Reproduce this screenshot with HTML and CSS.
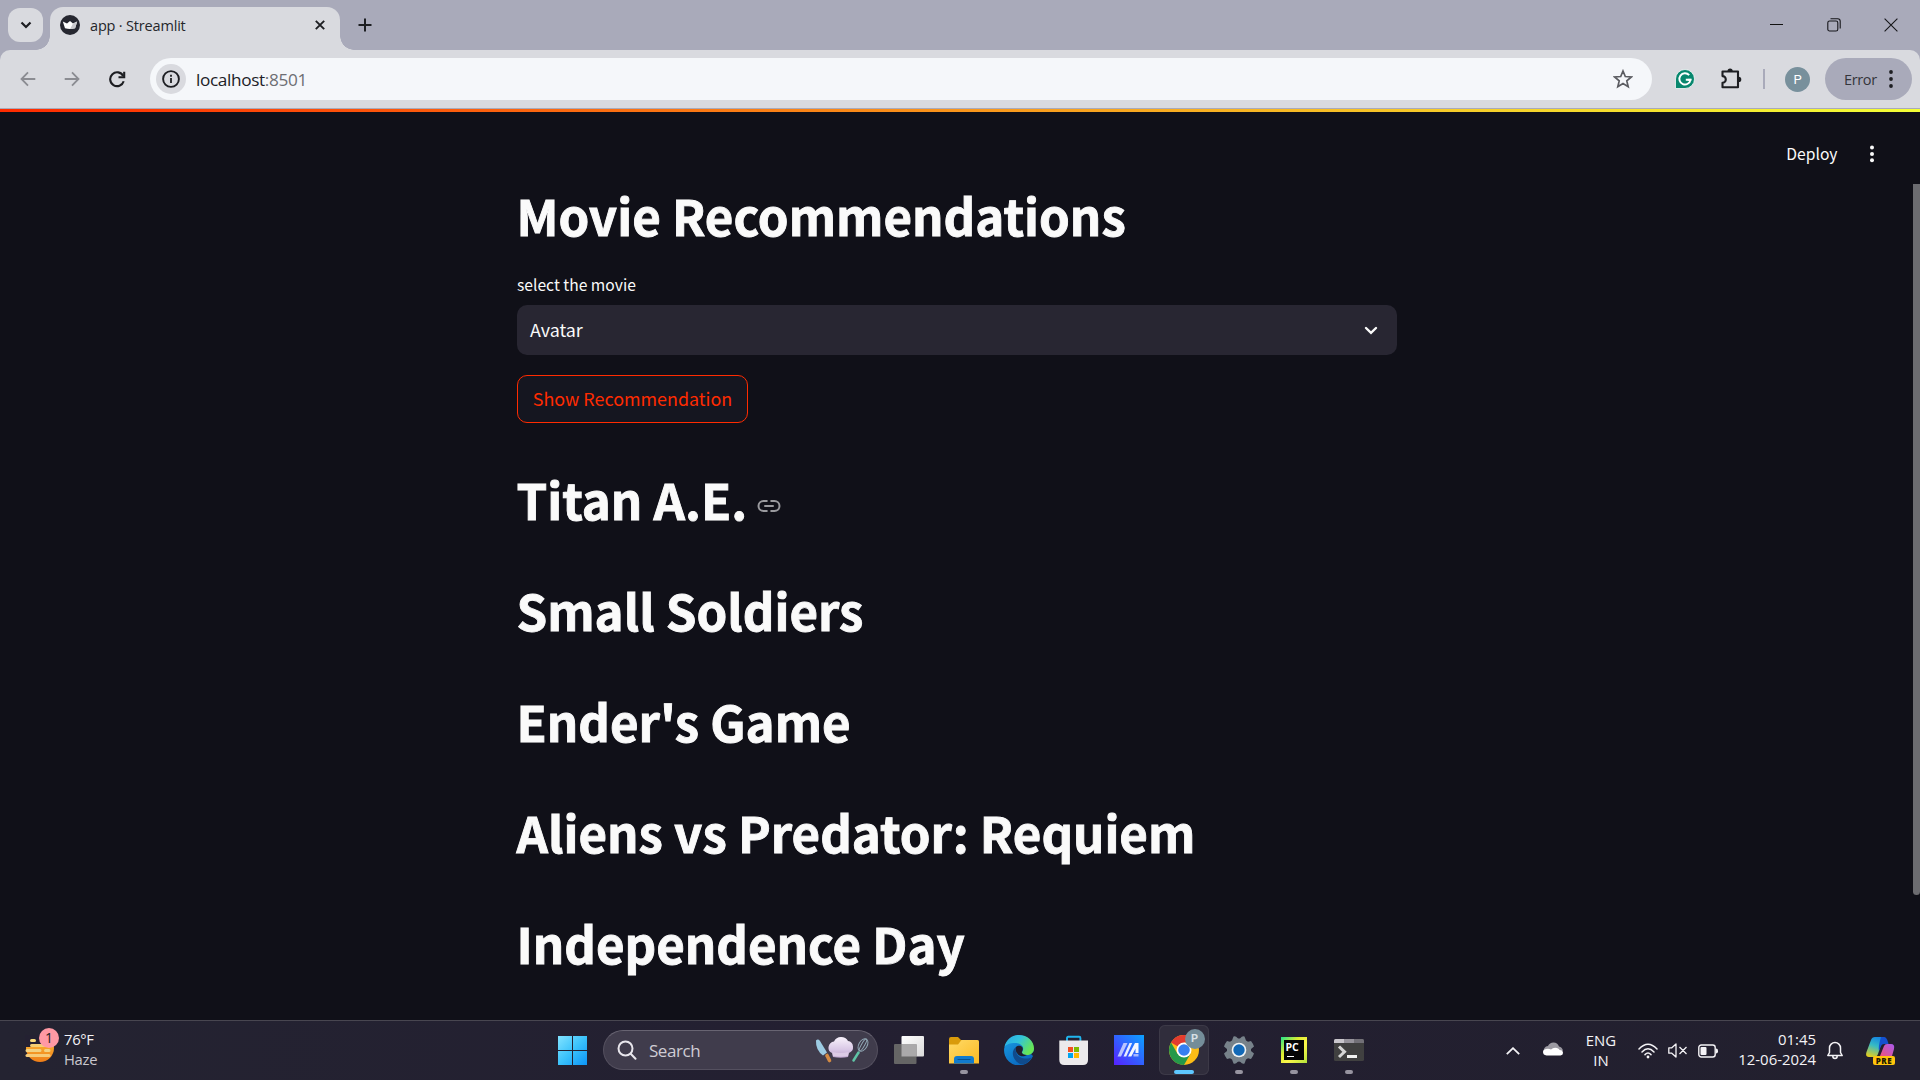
FILE: index.html
```html
<!DOCTYPE html>
<html lang="en">
<head>
<meta charset="utf-8">
<title>app · Streamlit</title>
<link rel="stylesheet" href="styles.css">
</head>
<body>
<div class="screen">
  <header class="tabstrip">
    <button class="tab-search" aria-label="Search tabs"><svg width="12" height="8" viewBox="0 0 12 8"><path d="M1.5 1.5 6 6l4.5-4.5" fill="none" stroke="#1d1e22" stroke-width="2.2"/></svg></button>
    <div class="tab">
      <svg class="favicon" width="20" height="20" viewBox="0 0 20 20"><circle cx="10" cy="10" r="10" fill="#262730"/><path d="M2.800 6.500 7 8.500 10 6l3 2.500 4.200-2-2.100 6.700Q10 14.800 5 13.200z" fill="#fff"/><path d="m13 8.500 4.200-2-2.100 6.700-5 .9z" fill="#c9c9cd"/></svg>
      <span class="tab-title">app · Streamlit</span>
      <svg class="tab-close" width="10" height="10" viewBox="0 0 10 10"><path d="m.8.8 8.400 8.400m0-8.400L.8 9.200" stroke="#1d1e22" stroke-width="1.900"/></svg>
    </div>
    <svg class="new-tab" width="14" height="14" viewBox="0 0 14 14"><path d="M7 .5v13M.5 7h13" stroke="#1d1e22" stroke-width="2"/></svg>
    <div class="window-controls">
      <svg width="14" height="14" viewBox="0 0 14 14"><path d="M0 6.500h13" stroke="#111"/></svg>
      <svg width="14" height="14" viewBox="0 0 14 14" fill="none" stroke="#16161a" stroke-width="1.100"><rect x=".8" y="3" width="10" height="10" rx="1.800"/><path d="M3.500.8h7.200q2.500 0 2.500 2.500v7.200"/></svg>
      <svg width="14" height="14" viewBox="0 0 14 14"><path d="m.6.6 12.800 12.800m0-12.800L.6 13.400" stroke="#16161a" stroke-width="1.100"/></svg>
    </div>
  </header>

  <nav class="toolbar-wrap"><div class="toolbar">
    <svg class="nav-back" width="16" height="16" viewBox="0 0 16 16" fill="none" stroke="#8b8c92" stroke-width="1.800"><path d="M15.300 8H1.800M8 1.300 1.500 8 8 14.700"/></svg>
    <svg class="nav-forward" width="16" height="16" viewBox="0 0 16 16" fill="none" stroke="#8b8c92" stroke-width="1.800"><path d="M.7 8h13.500M8 1.300 14.500 8 8 14.700"/></svg>
    <svg class="nav-reload" width="17" height="17" viewBox="0 0 17 17" fill="none" stroke="#1d1e22" stroke-width="2.100"><path d="M14.700 10.200A6.900 6.900 0 1 1 14.200 5"/><path d="M15.200.8v5.500H9.500"/></svg>
    <div class="omnibox">
      <span class="site-info"><svg width="18" height="18" viewBox="0 0 18 18"><circle cx="9" cy="9" r="7.900" fill="none" stroke="#1d1e22" stroke-width="1.900"/><path d="M9 8v5M9 4.800v2" stroke="#1d1e22" stroke-width="1.800"/></svg></span>
      <span class="url">localhost<span class="port">:8501</span></span>
      <svg class="star" width="20" height="20" viewBox="0 0 20 20"><path d="m10 2 2.300 5.500 6 .5-4.500 3.900 1.400 5.800L10 14.600l-5.200 3.100 1.400-5.800L1.700 8l6-.5z" fill="none" stroke="#5b5c61" stroke-width="1.700"/></svg>
    </div>
    <svg class="ext-grammar" width="20" height="20" viewBox="0 0 20 20"><path d="M10 .5A9.500 9.500 0 1 1 10 19.500H.5V10A9.500 9.500 0 0 1 10 .5z" fill="#08876e" stroke="#f4f7f7" stroke-width=".8"/><path d="M14.200 6.200A5.600 5.600 0 1 0 15.500 10.800H10.800" fill="none" stroke="#fff" stroke-width="1.900"/><path d="M12.700 10.800h3.600" stroke="#fff" stroke-width="1.900"/></svg>
    <svg class="ext-puzzle" width="22" height="22" viewBox="0 0 22 22"><path d="M2.500 3.500h15.500v15.800H2.500v-4.600a3.300 3.300 0 0 0 0-6.600z" fill="none" stroke="#1d1e22" stroke-width="2.100" stroke-linejoin="round"/><path d="M7.500 3a2.600 2.600 0 0 1 5.200 0M18.700 8.800a2.600 2.600 0 0 1 0 5.200" fill="#1d1e22"/></svg>
    <span class="divider"></span>
    <span class="avatar">P</span>
    <button class="error-menu"><span class="error-text">Error</span><svg width="4" height="18" viewBox="0 0 4 18" fill="#1d1e22"><circle cx="2" cy="2" r="1.900"/><circle cx="2" cy="9" r="1.900"/><circle cx="2" cy="16" r="1.900"/></svg></button>
  </div></nav>

  <main class="app">
    <div class="decoration"></div>
    <div class="app-actions">
      <span class="deploy">Deploy</span>
      <svg width="4" height="18" viewBox="0 0 4 18" fill="#fafafa"><circle cx="2" cy="2.500" r="2"/><circle cx="2" cy="8.900" r="2"/><circle cx="2" cy="15.200" r="2"/></svg>
    </div>
    <div class="scrollbar"></div>
    <section class="column">
      <h1>Movie Recommendations</h1>
      <label class="label">select the movie</label>
      <div class="select"><span class="select-value">Avatar</span><svg width="14" height="9" viewBox="0 0 14 9"><path d="m2 2 5 4.800L12 2" fill="none" stroke="#fafafa" stroke-width="2.400" stroke-linecap="round"/></svg></div>
      <button class="recommend">Show Recommendation</button>
      <h1>Titan A.E.<svg class="anchor" width="24" height="14" viewBox="0 0 24 14" fill="none" stroke="#9a9a9e" stroke-width="2" stroke-linecap="round"><path d="M9.800 2H6.500a5 5 0 0 0 0 10h3.300M14.200 2h3.300a5 5 0 0 1 0 10h-3.300M8 7h8"/></svg></h1>
      <h1>Small Soldiers</h1>
      <h1>Ender's Game</h1>
      <h1>Aliens vs Predator: Requiem</h1>
      <h1>Independence Day</h1>
    </section>
  </main>

  <footer class="taskbar">
    <div class="weather">
      <div class="weather-icon">
        <svg width="30" height="28" viewBox="0 0 30 28"><defs><linearGradient id="sun" x1="0" y1="0" x2="0" y2="1"><stop offset="0" stop-color="#ffc93d"/><stop offset="1" stop-color="#ee7d18"/></linearGradient></defs><circle cx="15" cy="13" r="14" fill="url(#sun)"/><path d="M0 0h30v8H22v4H0z" fill="#242132"/><g stroke-width="3" stroke-linecap="round"><path d="M6.500 5.500h3" stroke="#f9dc7b"/><path d="M6.500 10.500h14" stroke="#f5cf72"/><path d="M2 15.500h13M20.500 15.500h3.500" stroke="#f3d281"/><path d="M2 20.500h22" stroke="#f6cb78"/></g></svg>
        <span class="weather-badge">1</span>
      </div>
      <div class="weather-text"><span class="temp">76°F</span><span class="haze">Haze</span></div>
    </div>

    <div class="dock">
      <svg class="start" width="29" height="29" viewBox="0 0 29 29"><defs><linearGradient id="win" x1="0" y1="0" x2="1" y2="1"><stop offset="0" stop-color="#82e3ff"/><stop offset=".5" stop-color="#3bc2fb"/><stop offset="1" stop-color="#0c94f6"/></linearGradient></defs><path d="M0 0h14v14H0zM15 0h14v14H15zM0 15h14v14H0zM15 15h14v14H15z" fill="url(#win)"/></svg>
      <div class="search">
        <svg width="20" height="20" viewBox="0 0 20 20" fill="none" stroke="#e8e6ec" stroke-width="2" stroke-linecap="round"><circle cx="8.500" cy="8.500" r="7"/><path d="m13.700 13.700 4.800 5"/></svg>
        <span class="search-text">Search</span>
        <svg class="chef" width="54" height="28" viewBox="0 0 54 28"><defs><linearGradient id="hat" x1="0" y1="0" x2="0" y2="1"><stop offset="0" stop-color="#f8f2fb"/><stop offset=".6" stop-color="#d9c8e6"/><stop offset="1" stop-color="#b99fca"/></linearGradient></defs><path d="M1 4.500q2-2 4 .5l7 11.500-4 3Q.5 14 1 4.500z" fill="#9ccbe2"/><path d="m12 19.500 2.500 5" stroke="#d38a43" stroke-width="3.600" stroke-linecap="round"/><path d="M17 17q-4-1.500-3.500-6Q14.500 6 19 5.500 21 1 26 1t7 4q4.500.5 5 5.500.5 4.500-4 6.500l-1 4q-7 1.500-15 0z" fill="url(#hat)"/><path d="M17.500 16q8 2 16 0l-.5 4q-7 1.500-15 0z" fill="#dccbe6"/><g fill="none" stroke="#91a8b5" stroke-width="1"><ellipse cx="48" cy="9" rx="4.200" ry="6.800" transform="rotate(30 48 9)"/><ellipse cx="48" cy="9" rx="1.600" ry="6.800" transform="rotate(30 48 9)"/></g><path d="m43.500 16.500-5 8" stroke="#5fc4a6" stroke-width="2.500" stroke-linecap="round"/></svg>
      </div>
      <div class="dock-item"><svg width="30" height="30" viewBox="0 0 30 30"><defs><linearGradient id="tv" x1="0" y1="0" x2="1" y2="1"><stop offset="0" stop-color="#fff"/><stop offset="1" stop-color="#dadada"/></linearGradient></defs><rect x="7.500" y="1" width="22.500" height="20.500" rx="1" fill="url(#tv)"/><rect y="9" width="22.500" height="20" rx="1" fill="#656565"/><path d="M7.500 9h15v12.500h-15z" fill="#aaa9aa"/></svg></div>
      <div class="dock-item running"><svg width="30" height="30" viewBox="0 0 30 30"><defs><linearGradient id="folder" x1="0" y1="0" x2="1" y2="1"><stop offset="0" stop-color="#ffda67"/><stop offset="1" stop-color="#fbba23"/></linearGradient></defs><path d="M0 4q0-2 2-2h7l3 3h16q2 0 2 2v6H0z" fill="#d99b0b"/><path d="M0 9.500h9L12.500 5H28q2 0 2 2v21.500H0z" fill="url(#folder)"/><path d="M5 28.500V24q0-3 3-3h14q3 0 3 3v4.500z" fill="#117bcd"/><path d="M9 24.500h12" stroke="#075291" stroke-width="1.200" stroke-linecap="round"/></svg></div>
      <div class="dock-item"><svg width="30" height="30" viewBox="0 0 30 30"><defs><linearGradient id="e1" x1="0" y1="0" x2="1" y2=".5"><stop offset="0" stop-color="#28a9e7"/><stop offset=".5" stop-color="#32c3dc"/><stop offset="1" stop-color="#67e655"/></linearGradient><linearGradient id="e2" x1="0" y1="0" x2=".7" y2="1"><stop offset="0" stop-color="#1ba0e5"/><stop offset="1" stop-color="#0863bb"/></linearGradient></defs><path d="M29 21A15 15 0 1 1 30 14q0 3-3 5z" fill="url(#e2)"/><path d="M.4 12C2 4.500 8 0 15 0c8.500 0 15 6 15 13.500 0 4-3 6.500-7 6.500-3.500 0-5-1.500-5-2.500s1.200-1.500 1.200-4C19 10 15 8 11 8 6 8 2 9.500.4 12z" fill="url(#e1)"/><path d="M12 12c-3 2-4 6-2.500 10 2 5 6.500 7.500 9.500 7.500 4-1 7-4 8.500-7-3 1.500-8 1.500-11.500-.5-4-2.500-5-6.500-4-10z" fill="#104b8c"/><path d="M12 12c1.500-1.700 4.500-1.800 6.200 0 1.200 1.800.4 3.800-.3 4.700-.7 1.800 2.200 3.500 5.100 3.300-3 2-7 1.500-9-.5s-2.800-5-2-7.500z" fill="#211e2e"/></svg></div>
      <div class="dock-item"><svg width="30" height="30" viewBox="0 0 30 30"><path d="M8 7V3q0-1.200 1.200-1.200h11q1.200 0 1.200 1.200v4" fill="none" stroke="#20b5ee" stroke-width="1.900"/><path d="M.3 5.500h28.700V25q0 5-5 5H5.300q-5 0-5-5z" fill="#eceaec"/><path d="M9 12h5v5H9z" fill="#f25022"/><path d="M15 12h5v5h-5z" fill="#7fba00"/><path d="M9 18h5v5H9z" fill="#00a4ef"/><path d="M15 18h5v5h-5z" fill="#ffb900"/></svg></div>
      <div class="dock-item"><svg width="30" height="30" viewBox="0 0 30 30"><defs><linearGradient id="asus" x1="0" y1="1" x2="1" y2="0"><stop offset="0" stop-color="#5720ff"/><stop offset="1" stop-color="#0ba2ff"/></linearGradient></defs><path d="M0 0h30v30H0z" fill="url(#asus)"/><path d="M3.500 21.500 9.500 8h4l-6.500 13.500z" fill="#b9c4ff"/><path d="M9.500 21.500 15.500 8h2.700l-6 13.500z" fill="#e9edff"/><path d="M14 21.500 21 8h3.500v10h-3v-4.500l-4.200 8z" fill="#f4f7ff"/><path d="M19.500 19h5v2.500h-5z" fill="#a8b8ff"/></svg></div>
      <div class="dock-item active"><svg width="30" height="30" viewBox="0 0 30 30"><circle cx="15" cy="15" r="15" fill="#fdbd16"/><path d="M15 15 2.010 7.500A15 15 0 0 1 28 7.500H15z" fill="#e33b2e"/><path d="M15 15 15 30A15 15 0 0 1 2.010 7.500L8.500 18.700z" fill="#24994a"/><path d="M21.500 18.700 15 30l-1.500-7.500z" fill="#24994a"/><circle cx="15" cy="15" r="7.500" fill="#fff"/><circle cx="15" cy="15" r="5.800" fill="#367ff0"/></svg><span class="chrome-badge">P</span></div>
      <div class="dock-item running"><svg width="30" height="30" viewBox="0 0 30 30"><path d="M8 5.500 9.500 1.500Q12 .8 13.500 3q1.500 1 3 0Q18 .8 20.500 1.500L22 5.500l2 1.200 3-.7q2 2.500 3 5.500l-3 2.500v2l3 2.500q-1 3-3 5.500l-3-.7-2 1.200-1.500 4q-2.500.7-4-1.500-1.500-1-3 0-1.500 2.200-4 1.500L8 24.500l-2-1.200-3 .7q-2-2.500-3-5.500L3 16v-2L0 11.500Q1 8.500 3 6l3 .7z" fill="#77828a"/><circle cx="15" cy="15" r="7.300" fill="#f1f4f5"/><circle cx="15" cy="15" r="5.700" fill="#1269b7"/></svg></div>
      <div class="dock-item running"><div class="pycharm"><span class="pc">PC</span><i></i></div></div>
      <div class="dock-item running"><svg width="30" height="30" viewBox="0 0 30 30"><rect y="4" width="30" height="22" rx="1.500" fill="#404040"/><path d="M0 8V5.500Q0 4 1.500 4H10v4z" fill="#c9c6cc"/><path d="M10 4h10v4H10z" fill="#96939b"/><path d="M20 4h8.500Q30 4 30 5.500V8H20z" fill="#727077"/><path d="m5 11.500 5.500 5.300L5 22" fill="none" stroke="#d5d5d5" stroke-width="3"/><path d="M13 21.500h10" stroke="#f2f2f2" stroke-width="3"/></svg></div>
    </div>

    <div class="tray">
      <svg width="14" height="8" viewBox="0 0 14 8"><path d="m.8 7.200 6.200-6 6.200 6" fill="none" stroke="#f4f3f6" stroke-width="1.800"/></svg>
      <svg class="cloud" width="20" height="14" viewBox="0 0 20 14"><path d="M1 10A4.500 4.500 0 0 1 5 4Q6.500.5 10.500.5T16 4.500q3 .5 4 4l-4 2z" fill="#9c9aa2"/><path d="M3.500 13.500Q0 13 0 10q0-2.500 3-3 3-.5 5 .5 2.500-2.500 6-1.500 2.500 1 2.500 2 3.500 0 3.500 3 0 2-2.500 2.500z" fill="#fff"/></svg>
      <div class="language"><span>ENG</span><span>IN</span></div>
      <svg class="wifi" width="20" height="16" viewBox="0 0 20 16" fill="none" stroke="#f4f3f6" stroke-width="1.500" stroke-linecap="round"><path d="M1 6q9-9.500 18 0M4 8.900q6-6.300 12 0M7 11.600q3-3 6 0"/><circle cx="10" cy="14" r="1.400" fill="#f4f3f6" stroke="none"/></svg>
      <svg class="sound" width="20" height="15" viewBox="0 0 20 15" fill="none" stroke="#f4f3f6" stroke-width="1.300" stroke-linejoin="round"><path d="M.8 4.800h3L8 1v13l-4.200-3.800h-3zM11.500 4l7 7m0-7-7 7"/></svg>
      <svg class="battery" width="20" height="14" viewBox="0 0 20 14"><rect x=".8" y="1" width="16.400" height="12" rx="2.500" fill="none" stroke="#f4f3f6" stroke-width="1.400"/><rect x="2.500" y="3" width="6" height="8" rx="1" fill="#f4f3f6"/><path d="M18 4.500q2 0 2 2v1q0 2-2 2z" fill="#f4f3f6"/></svg>
      <div class="clock"><span class="time">01:45</span><span class="date">12-06-2024</span></div>
      <svg class="bell" width="16" height="19" viewBox="0 0 16 19" fill="none" stroke="#f4f3f6" stroke-width="1.500" stroke-linejoin="round"><path d="M2.500 7a5.500 5.500 0 0 1 11 0v4.500l1.700 3H.8l1.700-3zM5.800 15q0 2.500 2.200 2.500t2.200-2.500"/></svg>
      <div class="copilot"><svg width="30" height="28" viewBox="0 0 30 28"><defs><linearGradient id="c1" x1=".5" y1="0" x2=".2" y2="1"><stop offset="0" stop-color="#188bdf"/><stop offset=".4" stop-color="#36bbc5"/><stop offset="1" stop-color="#e9cf18"/></linearGradient><linearGradient id="c2" x1="0" y1="1" x2="1" y2="0"><stop offset="0" stop-color="#ee537a"/><stop offset="1" stop-color="#a85af0"/></linearGradient></defs><path d="M5 3q1-3 4-3h8.500L12 17q-1 3-4 3H3q-4 0-2.500-5z" fill="url(#c1)"/><path d="M15 0h3q2.500 0 4 5l.5 2H18q-2 0-3 2l-2 5q-1-4 2-14z" fill="#1450cf"/><path d="m14 19 4-10q.8-2 3-2h4q4 0 3 5l-2 7z" fill="url(#c2)"/></svg><span class="pre">PRE</span></div>
    </div>
  </footer>
</div>
</body>
</html>
```
FILE: styles.css
```css
* { box-sizing: border-box; }
body { margin: 0; font-family: "Open Sans", "Noto Sans", sans-serif; }
svg { display: block; flex: none; }
button { border: 0; padding: 0; font: inherit; }
.screen { width: 1920px; height: 1080px; display: flex; flex-direction: column; overflow: hidden; background: #101018; }

/* Browser chrome */
.tabstrip { height: 50px; display: flex; background: #a9aaba; padding-left: 8px; }
.tab-search { width: 35px; height: 34px; margin-top: 8px; border-radius: 12px; background: #d9dadf; display: flex; align-items: center; justify-content: center; }
.tab { position: relative; width: 290px; height: 43px; margin: 7px 0 0 7px; padding: 0 15px 7px 10px; border-radius: 13px 13px 0 0; background: #d9dadf; display: flex; align-items: center; }
.tab::before, .tab::after { content: ""; position: absolute; bottom: 0; width: 14px; height: 14px; }
.tab::before { left: -14px; background: radial-gradient(circle at 0 0, transparent 13.5px, #d9dadf 14px); }
.tab::after { right: -14px; background: radial-gradient(circle at 100% 0, transparent 13.5px, #d9dadf 14px); }
.favicon { margin-top: -1px; }
.tab-title { margin-left: 10px; flex: 1; font-size: 14.500px; letter-spacing: -0.180px; color: #25262b; white-space: nowrap; }
.new-tab { margin: 18px 0 0 18px; }
.window-controls { margin-left: auto; display: flex; gap: 43px; padding: 18px 22px 0 0; }
.toolbar-wrap { height: 59px; background: #a9aaba; border-bottom: 1px solid #a9aaba; }
.toolbar { height: 58px; border-radius: 10px 10px 0 0; background: #d9dadf; display: flex; align-items: center; padding: 0 8px 0 20px; }
.nav-forward { margin-left: 28px; }
.nav-reload { margin-left: 29px; }
.omnibox { width: 1502px; height: 42px; margin-left: 24px; padding: 0 19px 0 6px; border-radius: 21px; background: #f5f7fa; display: flex; align-items: center; }
.site-info { width: 30px; height: 30px; border-radius: 50%; background: #d9dadf; display: flex; align-items: center; justify-content: center; }
.url { margin-left: 10px; flex: 1; font-size: 17.200px; letter-spacing: -0.350px; color: #202126; }
.port { color: #6d6e73; }
.ext-grammar { margin-left: 23px; }
.ext-puzzle { margin-left: 25px; }
.divider { width: 2px; height: 20px; margin-left: 21px; background: #a9aaba; }
.avatar { width: 25px; height: 25px; margin-left: 20px; border-radius: 50%; background: #78909c; color: #fff; font: 13px/25px Roboto, sans-serif; text-align: center; }
.error-menu { width: 87px; height: 42px; margin-left: auto; padding: 0 19px 0 19px; border-radius: 21px; background: #a9aaba; display: flex; align-items: center; justify-content: space-between; }
.error-text { font-size: 14.500px; letter-spacing: -0.350px; color: #34353b; }

/* Application page */
.app { position: relative; height: 911px; background: #101018; color: #fafafa; font-family: "Noto Sans CJK JP", "Noto Sans CJK SC", sans-serif; }
.decoration { height: 3px; background: linear-gradient(90deg, #ff2b00, #f3ff36); }
.app-actions { position: absolute; top: 30px; right: 46px; height: 30px; display: flex; align-items: center; gap: 32.500px; }
.deploy { font-size: 15.650px; line-height: 30px; }
.scrollbar { position: absolute; right: 0; top: 75px; width: 7px; height: 711px; background: #6c6c70; border-radius: 0 0 4px 4px; }
.column { width: 880px; margin: 47px 0 0 517px; display: flex; flex-direction: column; align-items: flex-start; }
h1 { margin: 0 0 0 -0.500px; height: 111px; font-size: 49.200px; line-height: 111px; font-weight: 700; -webkit-text-stroke: 0.9px #fafafa; display: flex; white-space: nowrap; }
.anchor { margin: 56px 0 0 10px; }
.label { height: 28px; margin-bottom: 7px; font-size: 15.650px; line-height: 30px; }
.select { width: 880px; height: 50px; padding: 0 19px 0 13px; border-radius: 10px; background: #282632; display: flex; align-items: center; justify-content: space-between; font-size: 17.900px; }
.select-value { height: 50px; line-height: 48px; }
.recommend { width: 231px; height: 48px; margin: 20px 0; padding-bottom: 2px; border: 1px solid #ff2b00; border-radius: 10px; background: #151620; color: #ff2b00; font-size: 17.900px; line-height: 44px; white-space: nowrap; }

/* Taskbar */
.taskbar { height: 60px; border-top: 1px solid #484650; background: linear-gradient(90deg, #242331, #231f31 50%, #22202e); display: flex; color: #f4f3f6; }
.weather { width: 558px; padding-left: 25px; display: flex; align-items: flex-start; }
.weather-icon { position: relative; margin-top: 15px; }
.weather-icon svg { margin-top: -1px; }
.weather-badge { position: absolute; left: 14px; top: -8px; width: 20px; height: 20px; border-radius: 50%; background: #ff99a4; color: #222; font-size: 14px; line-height: 20px; text-align: center; }
.weather-text { margin: 8px 0 0 9px; display: flex; flex-direction: column; font-size: 14.800px; line-height: 20px; letter-spacing: -0.300px; }
.haze { color: #c9c7ce; }
.dock { display: flex; align-items: flex-start; }
.start { margin-top: 15px; }
.search { width: 275px; height: 40px; margin: 9px 3px 0 16px; padding: 0 8px 0 13px; border: 1px solid #54505f; border-top-color: #686472; border-radius: 20px; background: #403c4c; display: flex; align-items: center; }
.search-text { margin-left: 12px; flex: 1; font-size: 17px; letter-spacing: -0.450px; color: #cfccd4; }
.dock-item { position: relative; width: 50px; height: 50px; margin: 4px 2.500px 0; display: flex; align-items: center; justify-content: center; border-radius: 6px; }
.dock-item.active { background: #302d3c; box-shadow: inset 0 0 0 1px #3c3947; }
.dock-item.running::after, .dock-item.active::after { content: ""; position: absolute; bottom: 1px; left: 21px; width: 8px; height: 4px; border-radius: 2px; background: #9794a0; }
.dock-item.active::after { left: 15px; width: 20px; background: #5ec7ff; }
.chrome-badge { position: absolute; left: 26px; top: 4px; width: 20px; height: 20px; border-radius: 50%; background: #748d99; color: #d7e0e5; font: 700 11px/20px Roboto, sans-serif; text-align: center; }
.pycharm { width: 26px; height: 26px; border: 3px solid #e0ea38; border-image: linear-gradient(135deg, #20e58d, #dbed31 35%, #fcf74a 60%, #b3e33a) 3; background: #050505; position: relative; }
.pc { position: absolute; left: 2px; top: 1px; color: #fff; font-size: 10.500px; font-weight: 700; line-height: 12px; }
.pycharm i { position: absolute; left: 3px; bottom: 3px; width: 7px; height: 1px; background: #fff; }
.tray { margin-left: auto; padding-right: 25px; display: flex; align-items: center; }
.cloud { margin: -3px 0 0 23px; }
.language { width: 36px; margin: -2px 0 0 20px; text-align: center; }
.language, .clock { display: flex; flex-direction: column; font-size: 14.900px; line-height: 20px; letter-spacing: 0; }
.wifi { margin-left: 19px; }
.sound { margin-left: 10px; }
.battery { margin-left: 10px; }
.clock { width: 98px; text-align: right; white-space: nowrap; align-items: flex-end; margin-top: -3px; }
.bell { margin-left: 11px; }
.copilot { position: relative; width: 29px; height: 28px; margin-left: 23px; }
.pre { position: absolute; left: 7px; top: 19px; width: 22px; height: 9px; border-radius: 2px; background: #ffc40c; color: #211a00; font-size: 8px; line-height: 9px; font-weight: 800; text-align: center; letter-spacing: .5px; }
```
